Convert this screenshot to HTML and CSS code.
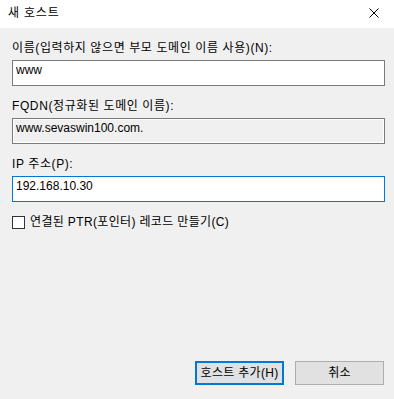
FILE: index.html
```html
<!DOCTYPE html>
<html lang="ko">
<head>
  <meta charset="UTF-8" />
  <title>새 호스트</title>
  <link rel="stylesheet" href="styles.css">
</head>
<body>

<div class="dialog">
  <div class="titlebar">
    <span class="title">새 호스트</span>
    <button class="close-btn" title="닫기">
      <svg width="10" height="10" viewBox="0 0 10 10">
        <path d="M0.5 0.5 L9.5 9.5 M9.5 0.5 L0.5 9.5" stroke="#000" stroke-width="1" fill="none"/>
      </svg>
    </button>
  </div>

  <div class="form">
    <div class="field">
      <label for="name">이름(입력하지 않으면 부모 도메인 이름 사용)(N):</label>
      <input id="name" class="edit" type="text" value="www">
    </div>

    <div class="field">
      <label for="fqdn">FQDN(정규화된 도메인 이름):</label>
      <input id="fqdn" class="edit readonly" type="text" value="www.sevaswin100.com." readonly>
    </div>

    <div class="field">
      <label for="ip">IP 주소(P):</label>
      <input id="ip" class="edit focused" type="text" value="192.168.10.30">
    </div>

    <label class="check">
      <span class="box"></span>
      연결된 PTR(포인터) 레코드 만들기(C)
    </label>
  </div>

  <div class="footer">
    <button class="btn default">호스트 추가(H)</button>
    <button class="btn">취소</button>
  </div>
</div>

</body>
</html>
```

FILE: styles.css
```css
* {
  box-sizing: border-box;
}

body {
  margin: 0;
  padding: 0;
  background: #f0f0f0;
  font-family: 'Liberation Sans', 'Noto Sans CJK KR', sans-serif;
  font-size: 12px;
  color: #000;
}

.dialog {
  height: 100vh;
  display: flex;
  flex-direction: column;
}

.titlebar {
  height: 28px;
  background: #fff;
  display: flex;
  align-items: center;
  justify-content: space-between;
  padding: 0 0 2px 8px;
}

.title {
  line-height: 16px;
  letter-spacing: 0.8px;
}

.close-btn {
  width: 46px;
  height: 28px;
  margin-top: 2px;
  border: none;
  background: transparent;
  display: flex;
  align-items: flex-start;
  justify-content: center;
  padding: 8px 0 0 6px;
}

.form {
  flex: 1;
  padding: 12px 9px 0 12px;
  display: flex;
  flex-direction: column;
  gap: 12px;
}

.field {
  display: flex;
  flex-direction: column;
  gap: 4px;
}

.field label {
  line-height: 16px;
  letter-spacing: 0.6px;
}

.edit {
  height: 26px;
  width: 100%;
  margin: 0;
  border: 1px solid #7a7a7a;
  background: #fff;
  padding: 0 3px 6px 3px;
  font-family: inherit;
  font-size: 12px;
  color: #000;
  outline: none;
}

.edit.readonly {
  background: #f0f0f0;
  box-shadow: inset 0 0 0 1px #fff;
}

.edit.focused {
  border-color: #0078d7;
}

.check {
  display: flex;
  align-items: center;
  gap: 5px;
  line-height: 16px;
  letter-spacing: 0.35px;
}

.check .box {
  width: 13px;
  height: 13px;
  border: 1px solid #333;
  background: #fff;
}

.footer {
  display: flex;
  justify-content: flex-end;
  gap: 11px;
  padding: 0 10px 14px 0;
}

.btn {
  width: 89px;
  height: 24px;
  margin: 0;
  background: #e1e1e1;
  border: 1px solid #adadad;
  font-family: inherit;
  font-size: 12px;
  color: #000;
  padding: 0 0 3px;
  letter-spacing: 0.3px;
}

.btn.default {
  border: 2px solid #0078d7;
}
```
